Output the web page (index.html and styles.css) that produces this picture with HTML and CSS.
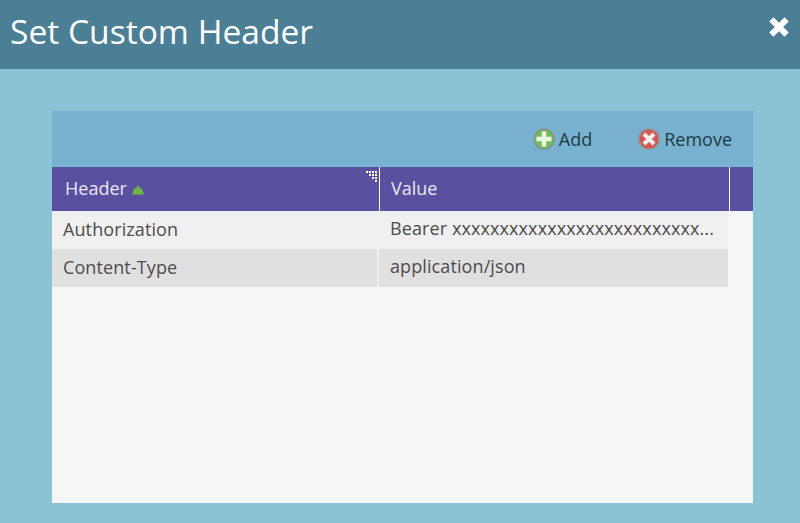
FILE: index.html
```html
<!DOCTYPE html>
<html lang="en">
<head>
    <meta charset="UTF-8">
    <title>Set Custom Header</title>
    <link rel="stylesheet" href="styles.css">
</head>
<body>
    <div class="dialog">
        <div class="title-bar">
            <h1>Set Custom Header</h1>
            <svg class="close" viewBox="0 0 22 22">
                <path d="M4 4l14 14M18 4L4 18" fill="none" stroke="#fff" stroke-width="5.5"></path>
            </svg>
        </div>
        <div class="body">
            <div class="panel">
                <div class="toolbar">
                    <a class="tool add">
                        <svg viewBox="0 0 22 22">
                            <circle cx="11" cy="11" r="10" fill="#72bd55" stroke="#87958c" stroke-width="1.6"></circle>
                            <path d="M11 3.500v15M3.500 11h15" stroke="#eef6e8" stroke-width="4.500"></path>
                        </svg>
                        Add
                    </a>
                    <a class="tool remove">
                        <svg viewBox="0 0 22 22">
                            <circle cx="11" cy="11" r="10" fill="#d9534f" stroke="#949090" stroke-width="1.6"></circle>
                            <path d="M6 6l10 10M16 6L6 16" stroke="#f8efee" stroke-width="4"></path>
                        </svg>
                        Remove
                    </a>
                </div>
                <div class="grid-head">
                    <div class="col-a">
                        Header
                        <svg class="sort" viewBox="0 0 12 10">
                            <path d="M6 0l2 3.500 1.500-.5 2.500 6.500H0L2.500 3 4 3.500z" fill="#6cb83f"></path>
                        </svg>
                        <svg class="grip" viewBox="0 0 14 14">
                            <path d="M1 2h2v2H1zM4 2h2v2H4zM7 2h2v2H7zM10 2h2v2h-2zM4 5h2v2H4zM7 5h2v2H7zM10 5h2v2h-2zM7 8h2v2H7zM10 8h2v2h-2zM10 11h2v2h-2z" fill="#fff"></path>
                        </svg>
                    </div>
                    <div class="col-b">Value</div>
                </div>
                <div class="row odd">
                    <div class="col-a">Authorization</div>
                    <div class="col-b">Bearer xxxxxxxxxxxxxxxxxxxxxxxxxx...</div>
                </div>
                <div class="row even">
                    <div class="col-a">Content-Type</div>
                    <div class="col-b">application/json</div>
                </div>
            </div>
        </div>
    </div>
</body>
</html>
```

FILE: styles.css
```css
* {
    margin: 0;
    padding: 0;
    box-sizing: border-box;
    font-family: "Open Sans", "Noto Sans", sans-serif;
}

body {
    width: 800px;
    height: 523px;
    overflow: hidden;
    background: #8ac3d3;
}

.title-bar {
    height: 69px;
    background: #4a7f95;
    display: flex;
    justify-content: space-between;
    padding: 0 10px;
}

.title-bar h1 {
    font-size: 33.6px;
    font-weight: 400;
    line-height: 63px;
    color: #fff;
}

.close {
    width: 24px;
    height: 24px;
    margin: 15px -1px 0 0;
}

.body {
    padding: 42px 47px 20px 52px;
}

.panel {
    height: 392px;
    background: #f6f6f6;
}

.toolbar {
    height: 56px;
    background: #78b2cf;
    display: flex;
    justify-content: flex-end;
    align-items: center;
    gap: 46px;
    padding: 0 21px 0 0;
}

.tool {
    display: flex;
    align-items: center;
    gap: 4px;
    font-size: 18px;
    color: #1f3b46;
}

.tool svg {
    width: 22px;
    height: 22px;
}

.grid-head {
    height: 44px;
    background: #5a50a0;
    display: flex;
    color: #e8e8f4;
    font-size: 18px;
}

.grid-head .col-a,
.grid-head .col-b {
    display: flex;
    align-items: center;
    border-right: 1.5px solid #fff;
    padding-left: 13px;
    padding-bottom: 2px;
}

.grid-head .col-a {
    width: 328px;
    position: relative;
}

.grid-head .col-b {
    width: 350px;
    padding-left: 11px;
}

.sort {
    width: 12px;
    height: 10px;
    margin-left: 5px;
    margin-top: 3px;
}

.grip {
    position: absolute;
    top: 2px;
    right: 0;
    width: 14px;
    height: 14px;
}

.row {
    display: flex;
    width: 676px;
    height: 38px;
    align-items: center;
    font-size: 18px;
    color: #4c4c4c;
}

.row.odd {
    background: #f0f0f0;
}

.row.even {
    background: #e0e0e0;
}

.row .col-a {
    width: 325px;
    padding-left: 11px;
    padding-bottom: 3px;
    letter-spacing: 0.1px;
}

.row .col-b {
    width: 351px;
    height: 100%;
    line-height: 35px;
    padding-left: 11px;
    border-left: 2px solid #f0f0f0;
    white-space: nowrap;
    letter-spacing: 0.1px;
}
```
